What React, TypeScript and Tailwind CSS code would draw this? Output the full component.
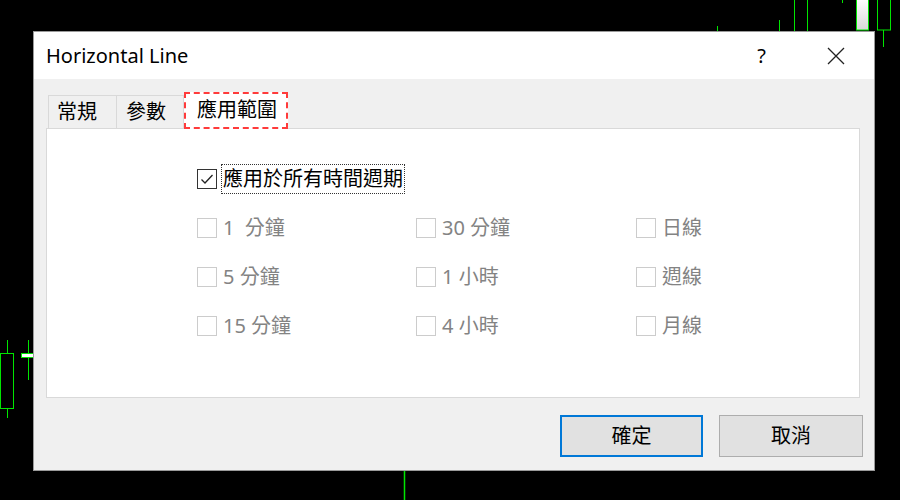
import React from "react";

const FONT = '"Noto Sans", "Noto Sans CJK TC", sans-serif';

function Chart() {
  const g = "#00e600";
  return (
    <svg className="absolute inset-0" width="900" height="500" viewBox="0 0 900 500">
      <rect width="900" height="500" fill="#000" />
      <line x1="717.5" y1="26" x2="717.5" y2="31" stroke={g} strokeWidth="1" />
      <line x1="779.5" y1="20" x2="779.5" y2="31" stroke={g} strokeWidth="1" />
      <line x1="794.5" y1="0" x2="794.5" y2="31" stroke={g} strokeWidth="1" />
      <line x1="807.5" y1="0" x2="807.5" y2="31" stroke={g} strokeWidth="1" />
      <line x1="842.5" y1="0" x2="842.5" y2="3" stroke={g} strokeWidth="1" />
      <defs>
        <linearGradient id="wg" x1="0" y1="0" x2="0" y2="1">
          <stop offset="0" stopColor="#ffffff" />
          <stop offset="1" stopColor="#d8d8d8" />
        </linearGradient>
      </defs>
      <rect x="856.5" y="-1" width="12" height="31" fill="url(#wg)" stroke={g} strokeWidth="1" />
      <rect x="877.5" y="-1" width="13" height="31" fill="none" stroke={g} strokeWidth="1" />
      <line x1="883.5" y1="30" x2="883.5" y2="47" stroke={g} strokeWidth="1" />
      <line x1="7.5" y1="340" x2="7.5" y2="418" stroke={g} strokeWidth="1" />
      <rect x="0.5" y="353.5" width="13" height="55" fill="#000" stroke={g} strokeWidth="1" />
      <line x1="28.5" y1="340" x2="28.5" y2="380" stroke={g} strokeWidth="1" />
      <rect x="21.5" y="353.5" width="14" height="4" fill="#fff" stroke={g} strokeWidth="1" />
      <line x1="404.5" y1="471" x2="404.5" y2="500" stroke={g} strokeWidth="1.5" />
    </svg>
  );
}

function Box({ checked, disabled }: { checked?: boolean; disabled?: boolean }) {
  return (
    <div
      className={
        "w-[20px] h-[20px] shrink-0 bg-white border flex items-center justify-center " +
        (disabled ? "border-[#cccccc]" : "border-[#333333]")
      }
    >
      {checked && (
        <svg width="16" height="16" viewBox="0 0 16 16">
          <path d="M2.5 8.5 L6 12 L13.5 4" fill="none" stroke="#222" strokeWidth="1.3" />
        </svg>
      )}
    </div>
  );
}

function Opt({ label }: { label: string }) {
  return (
    <div className="flex items-center h-[30px] gap-[6px]">
      <Box disabled />
      <span className="text-[#838383] text-[20px] leading-none whitespace-pre">{label}</span>
    </div>
  );
}

export default function App() {
  const rows = [
    ["1  分鐘", "30 分鐘", "日線"],
    ["5 分鐘", "1 小時", "週線"],
    ["15 分鐘", "4 小時", "月線"],
  ];
  return (
    <div className="relative w-[900px] h-[500px] overflow-hidden" style={{ fontFamily: FONT }}>
      <Chart />
      <div className="relative pl-[33px] pt-[31px]">
        <div className="w-[842px] h-[440px] border border-[#9a9a9a] flex flex-col bg-[#f0f0f0]">
          {/* title bar */}
          <div className="h-[47px] bg-white flex items-center pl-[12px] shrink-0">
            <span className="text-[20px] text-black leading-none">Horizontal Line</span>
            <span className="ml-auto text-[20px] text-black leading-none mr-[61px]">?</span>
            <svg width="18" height="18" viewBox="0 0 18 18" className="mr-[29px]">
              <path d="M1 1 L17 17 M17 1 L1 17" stroke="#222" strokeWidth="1.3" />
            </svg>
          </div>
          {/* body */}
          <div className="flex-1 flex flex-col pt-[13px] pl-[13px] pr-[14px]">
            {/* tabs */}
            <div className="flex items-end h-[36px] pl-[1px]">
              <div className="h-[33px] w-[69px] border border-b-0 border-[#d9d9d9] flex items-center pl-[8px] text-[20px] leading-none text-black">
                常規
              </div>
              <div className="h-[33px] w-[67px] border border-b-0 border-l-0 border-[#d9d9d9] flex items-center pl-[9px] text-[20px] leading-none text-black">
                參數
              </div>
              <div className="relative -mb-px z-10 h-[37px] w-[104px] bg-white border-2 border-dashed border-[#ff3b3b] flex items-center pl-[11px] pb-[2px] text-[20px] leading-none text-black">
                應用範圍
              </div>
            </div>
            {/* panel */}
            <div className="-ml-px h-[270px] bg-white border border-[#d9d9d9] pl-[150px] pt-[35px] flex flex-col gap-[19px]">
              <div className="flex items-center h-[30px] gap-[4px]">
                <Box checked />
                <span className="h-[30px] flex items-center border border-dotted border-[#333] px-[1px] text-[20px] leading-none text-black">
                  應用於所有時間週期
                </span>
              </div>
              {rows.map((r, i) => (
                <div key={i} className="grid grid-cols-[219px_220px_200px]">
                  {r.map((l) => (
                    <Opt key={l} label={l} />
                  ))}
                </div>
              ))}
            </div>
            {/* buttons */}
            <div className="flex justify-end gap-[16px] mt-[17px] -mr-[3px]">
              <button className="w-[143px] h-[42px] bg-[#e1e1e1] border-2 border-[#0078d7] text-[20px] text-black leading-none">
                確定
              </button>
              <button className="w-[144px] h-[42px] bg-[#e1e1e1] border border-[#adadad] text-[20px] text-black leading-none">
                取消
              </button>
            </div>
          </div>
        </div>
      </div>
    </div>
  );
}
